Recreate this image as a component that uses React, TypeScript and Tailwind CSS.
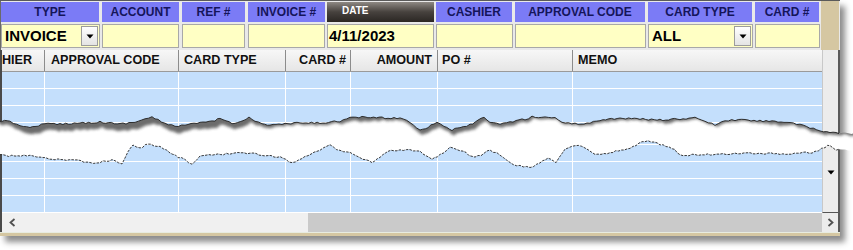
import React from "react";

const FONT = { fontFamily: '"Liberation Sans", Arial, sans-serif' };

function rng(seed: number) {
  let s = seed;
  return () => {
    s = (s * 16807) % 2147483647;
    return (s - 1) / 2147483646;
  };
}

const TOP: [number, number][] = [
  [-4, 120], [10, 122], [20, 125], [30, 128], [35, 126], [45, 124], [60, 124], [80, 123], [100, 122],
  [120, 124], [135, 122], [145, 119], [152, 117], [158, 120], [165, 124], [175, 126], [185, 125],
  [200, 123], [215, 121], [220, 118], [226, 121], [235, 124], [243, 120], [249, 117], [255, 121],
  [262, 124], [270, 125], [285, 124], [300, 123], [320, 123], [340, 121], [350, 118], [365, 117],
  [385, 118], [400, 118], [410, 122], [420, 130], [428, 127], [437, 122], [444, 126], [452, 130],
  [460, 128], [470, 125], [478, 120], [484, 118], [490, 123], [500, 124], [510, 122], [525, 119],
  [532, 117], [545, 117], [555, 118], [562, 122], [575, 124], [590, 123], [600, 120], [620, 118],
  [640, 119], [660, 120], [680, 119], [695, 118], [705, 121], [715, 125], [725, 121], [735, 120],
  [745, 120], [760, 121], [775, 121], [790, 123], [800, 125], [810, 128], [820, 131], [830, 132],
  [839, 133], [845, 133], [858, 134],
];

const BOTTOM: [number, number][] = [
  [-4, 155], [15, 156], [30, 155], [40, 157], [55, 159], [75, 160], [90, 163], [100, 162], [115, 160],
  [122, 164], [128, 152], [133, 145], [140, 148], [148, 144], [160, 147], [170, 153], [178, 157],
  [185, 160], [192, 164], [200, 156], [215, 155], [235, 153], [250, 153], [265, 156], [280, 157],
  [292, 163], [305, 157], [320, 150], [330, 145], [340, 151], [350, 153], [360, 158], [372, 162],
  [380, 157], [388, 151], [400, 150], [410, 150], [420, 152], [432, 160], [440, 155], [450, 147],
  [460, 150], [475, 158], [490, 150], [500, 155], [510, 163], [520, 166], [530, 168], [540, 162],
  [548, 158], [556, 162], [565, 150], [575, 145], [585, 148], [595, 155], [610, 153], [630, 148],
  [645, 141], [660, 144], [672, 148], [680, 155], [695, 155], [720, 154], [750, 153], [780, 154],
  [800, 153], [815, 152], [825, 147], [830, 145], [836, 150], [839, 150], [845, 150], [858, 150],
];

function jag(pts: [number, number][], seed: number) {
  const r = rng(seed);
  const out: [number, number][] = [];
  for (let i = 0; i < pts.length - 1; i++) {
    const [x0, y0] = pts[i];
    const [x1, y1] = pts[i + 1];
    const n = Math.max(1, Math.round((x1 - x0) / 3));
    for (let k = 0; k < n; k++) {
      const t = k / n;
      out.push([x0 + (x1 - x0) * t, y0 + (y1 - y0) * t + (r() - 0.5) * 1.8]);
    }
  }
  out.push(pts[pts.length - 1]);
  return out;
}

function Tear() {
  const top = jag(TOP, 12345);
  const bot = jag(BOTTOM, 777);
  const r = rng(4242);
  const line = (p: [number, number][]) => p.map(([x, y]) => `${x.toFixed(1)},${y.toFixed(1)}`).join(" ");
  const whiteD = `M${line(top)} L${line([...bot].reverse())} Z`;
  let depth = 4;
  const lower = top.map(([x, y]) => {
    depth = Math.max(1.5, Math.min(7, depth + (r() - 0.5) * 1.6));
    return [x + 2, y + depth] as [number, number];
  });
  const shadowPts = [...top.map(([x, y]) => [x, y - 3] as [number, number]), ...[...lower].reverse()];
  const inside = (p: [number, number][]) => p.filter(([x]) => x <= 839.5);
  return (
    <svg className="pointer-events-none absolute left-0 top-0" width={853} height={250}>
      <defs>
        <clipPath id="tearclip">
          <path d={whiteD} />
        </clipPath>
        <filter id="blur" x="-5%" y="-50%" width="110%" height="200%">
          <feGaussianBlur stdDeviation="1.4" />
        </filter>
      </defs>
      <path d={whiteD} fill="#ffffff" />
      <g clipPath="url(#tearclip)">
        <polygon points={line(shadowPts)} fill="#3a3a3a" opacity={0.75} filter="url(#blur)" />
      </g>
      <polyline points={line(inside(top))} fill="none" stroke="#1e1e1e" strokeWidth={0.9} />
      <polyline points={line(inside(bot))} fill="none" stroke="#222" strokeWidth={0.9} strokeDasharray="2.5 1.2" />
    </svg>
  );
}

function Caret() {
  return (
    <svg width="8" height="5" viewBox="0 0 8 5">
      <polygon points="0.5,0.5 7.5,0.5 4,4.5" fill="#000" />
    </svg>
  );
}

function Combo({ text, className }: { text: string; className: string }) {
  return (
    <div className={`flex h-full items-center justify-between border border-[#a8a8a8] bg-[#ffffc4] ${className}`}>
      <span className="pl-[3px] text-[15px] font-bold text-black">{text}</span>
      <div className="mr-[1px] flex h-[20px] w-[17px] items-center justify-center border border-[#9c9c9c] bg-gradient-to-b from-[#ffffff] to-[#e4e4e4]">
        <Caret />
      </div>
    </div>
  );
}

function HeadCell({ label, className }: { label: string; className: string }) {
  return (
    <div className={`flex h-full items-center justify-center bg-[#7b7bf6] text-[12px] font-bold text-[#15155a] ${className}`}>
      {label}
    </div>
  );
}

function Yellow({ className, children }: { className: string; children?: React.ReactNode }) {
  return (
    <div className={`flex h-full items-center border border-[#a8a8a8] bg-[#ffffc4] ${className}`}>{children}</div>
  );
}

function GridRow() {
  const cls = "h-full border-r border-white";
  return (
    <div className="flex h-[17px] shrink-0 border-b border-white bg-[#c4dffc]">
      <div className={`w-[43px] ${cls}`} />
      <div className={`w-[134px] ${cls}`} />
      <div className={`w-[107px] ${cls}`} />
      <div className={`w-[65px] ${cls}`} />
      <div className={`w-[87px] ${cls}`} />
      <div className={`w-[135px] ${cls}`} />
      <div className="h-full w-[249px]" />
    </div>
  );
}

export default function App() {
  const gh = "flex h-full items-center border-r border-[#8c8c8c] text-[12.6px] font-bold text-[#111]";
  return (
    <div className="relative h-[250px] w-[853px] overflow-hidden bg-white" style={FONT}>
      <div className="flex w-[840px] flex-col shadow-[5px_6px_6px_rgba(0,0,0,0.45)]">
        {/* filter header */}
        <div className="flex h-[50px] border-t border-[#5a5a5a] bg-[#e9e9e9]">
          <div className="flex w-[821px] flex-col border-l border-[#6a6a6a]">
            <div className="mt-[1px] flex h-[20px]">
              <HeadCell label="TYPE" className="w-[98px]" />
              <HeadCell label="ACCOUNT" className="ml-[3px] w-[77px]" />
              <HeadCell label="REF #" className="ml-[3px] w-[63px]" />
              <HeadCell label="INVOICE #" className="ml-[3px] w-[77px]" />
              <div className="ml-[2px] h-full w-[107px] bg-gradient-to-b from-[#8e8984] via-[#47423e] to-[#2b2724] pl-[15px] pt-[3px] text-[10px] font-bold leading-[12px] text-white">
                DATE
              </div>
              <HeadCell label="CASHIER" className="ml-[2px] w-[76px]" />
              <HeadCell label="APPROVAL CODE" className="ml-[3px] w-[130px]" />
              <HeadCell label="CARD TYPE" className="ml-[3px] w-[104px]" />
              <HeadCell label="CARD #" className="ml-[3px] w-[64px]" />
            </div>
            <div className="mt-[2px] flex h-[24px]">
              <Combo text="INVOICE" className="w-[99px]" />
              <Yellow className="ml-[2px] w-[77px]" />
              <Yellow className="ml-[3px] w-[63px]" />
              <Yellow className="ml-[3px] w-[77px]" />
              <Yellow className="ml-[2px] w-[107px]">
                <span className="pl-[1px] text-[15px] font-bold text-black">4/11/2023</span>
              </Yellow>
              <Yellow className="ml-[2px] w-[77px]" />
              <Yellow className="ml-[2px] w-[131px]" />
              <Combo text="ALL" className="ml-[2px] w-[105px]" />
              <Yellow className="ml-[2px] w-[65px]" />
            </div>
          </div>
          <div className="w-[18px] bg-[#d5c7a2]" />
        </div>

        {/* grid */}
        <div className="flex">
          <div className="w-[2px] bg-[#4a4a4a]" />
          <div className="flex w-[820px] flex-col">
            <div className="flex h-[22px] border-b border-[#9a9a9a] bg-gradient-to-b from-[#f7f7f7] to-[#e6e6e6]">
              <div className={`w-[43px] ${gh}`}>HIER</div>
              <div className={`w-[134px] pl-[6px] ${gh}`}>APPROVAL CODE</div>
              <div className={`w-[107px] pl-[5px] ${gh}`}>CARD TYPE</div>
              <div className={`w-[65px] justify-end pr-[4px] ${gh}`}>CARD #</div>
              <div className={`w-[87px] justify-end pr-[5px] ${gh}`}>AMOUNT</div>
              <div className={`w-[135px] pl-[4px] ${gh}`}>PO #</div>
              <div className="flex h-full w-[249px] items-center pl-[5px] text-[12.6px] font-bold text-[#111]">MEMO</div>
            </div>
            <div className="flex h-[56px] flex-col overflow-hidden">
              <GridRow />
              <GridRow />
              <GridRow />
              <GridRow />
            </div>
            <div className="flex h-[85px] flex-col">
              <GridRow />
              <GridRow />
              <GridRow />
              <GridRow />
              <GridRow />
            </div>
          </div>
          <div className="flex w-[16px] flex-col border-b border-l border-b-[#555] border-l-[#c8c8c8] bg-[#ececec]">
            <div className="h-[120px]" />
            <div className="flex justify-center">
              <Caret />
            </div>
          </div>
          <div className="w-[2px] bg-[#5a5a5a]" />
        </div>

        {/* horizontal scrollbar */}
        <div className="flex h-[19px]">
          <div className="w-[2px] bg-[#4a4a4a]" />
          <div className="flex w-[306px] items-center bg-[#f0f0f0] pl-[7px]">
            <svg width="7" height="9" viewBox="0 0 7 9">
              <polyline points="5.5,1 1.5,4.5 5.5,8" fill="none" stroke="#505050" strokeWidth="1.8" />
            </svg>
          </div>
          <div className="w-[514px] bg-[#cacaca]" />
          <div className="flex w-[16px] items-center justify-center bg-[#ececec]">
            <svg width="7" height="9" viewBox="0 0 7 9">
              <polyline points="1.5,1 5.5,4.5 1.5,8" fill="none" stroke="#505050" strokeWidth="1.8" />
            </svg>
          </div>
          <div className="w-[2px] bg-[#5a5a5a]" />
        </div>
        <div className="h-[1px] bg-[#e8ece0]" />
        <div className="h-[3px] bg-[#d5c7a2]" />
      </div>
      <Tear />
    </div>
  );
}
